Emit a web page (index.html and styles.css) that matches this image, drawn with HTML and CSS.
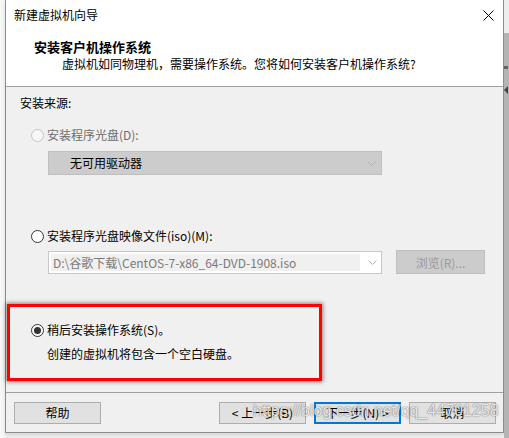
FILE: index.html
```html
<!DOCTYPE html>
<html lang="zh-CN">
<head>
<meta charset="utf-8">
<title>新建虚拟机向导</title>
<link rel="stylesheet" href="styles.css">
</head>
<body>
<div class="screen">
  <div class="gutter-left"></div>
  <div class="window">
    <div class="titlebar">
      <span class="title">新建虚拟机向导</span>
      <svg class="close" width="11" height="11" viewBox="0 0 11 11"><path d="M0.5 0.5 L10.5 10.5 M10.5 0.5 L0.5 10.5" stroke="#000" stroke-width="1" fill="none"/></svg>
    </div>
    <div class="header">
      <div class="h-title">安装客户机操作系统</div>
      <div class="h-sub">虚拟机如同物理机，需要操作系统。您将如何安装客户机操作系统?</div>
    </div>
    <div class="content">
      <div class="label">安装来源:</div>
      <div class="radio-row row-disc disabled"><span class="radio"></span><span>安装程序光盘(D):</span></div>
      <div class="select">
        <span class="select-text">无可用驱动器</span>
        <svg class="chev" width="9" height="5" viewBox="0 0 9 5"><path d="M0.5 0.5 L4.5 4.5 L8.5 0.5" stroke="#b0b0b0" fill="none"/></svg>
      </div>
      <div class="radio-row row-iso"><span class="radio"></span><span>安装程序光盘映像文件(iso)(M):</span></div>
      <div class="path-row">
        <div class="combo">
          <span class="combo-text">D:\谷歌下载\CentOS-7-x86_64-DVD-1908.iso</span>
          <svg class="chev" width="9" height="5" viewBox="0 0 9 5"><path d="M0.5 0.5 L4.5 4.5 L8.5 0.5" stroke="#b0b0b0" fill="none"/></svg>
        </div>
        <div class="browse">浏览(R)...</div>
      </div>
      <div class="highlight">
        <div class="radio-row"><span class="radio checked"></span><span>稍后安装操作系统(S)。</span></div>
        <div class="desc">创建的虚拟机将包含一个空白硬盘。</div>
      </div>
    </div>
    <div class="footer">
      <div class="btn">帮助</div>
      <div class="spacer"></div>
      <div class="btn">&lt; 上一步(B)</div>
      <div class="btn default">下一步(N) &gt;</div>
      <div class="btn">取消</div>
    </div>
  </div>
  <div class="gutter-right">
    <div class="gr-top"></div>
    <div class="gr-dash"></div>
    <div class="gr-arrow"></div>
  </div>
</div>
<div class="watermark">https://blog.csdn.net/qq_44701258</div>
</body>
</html>
```
FILE: styles.css
```css
html, body {
  margin: 0;
  padding: 0;
}
body {
  width: 509px;
  height: 438px;
  overflow: hidden;
  background: #f0f0f0;
  font-family: "Noto Sans CJK SC", "Noto Sans", sans-serif;
  font-size: 12px;
  color: #000;
  position: relative;
}
.screen {
  display: flex;
  height: 438px;
}
.gutter-left {
  width: 5px;
  background: #f7f7f7;
}
.window {
  width: 497px;
  height: 432px;
  border: 1px solid #8c8c8c;
  border-top: none;
  background: #f0f0f0;
  display: flex;
  flex-direction: column;
  box-shadow: 0 2px 4px rgba(0,0,0,0.12);
}
.gutter-right {
  flex: 1;
  background: #b4b4b4;
  display: flex;
  flex-direction: column;
}
.gr-top {
  height: 33px;
  background: #ededed;
}
.gr-dash {
  margin-top: 33px;
  height: 3px;
  width: 4px;
  background: #5a6470;
}
.gr-arrow {
  margin-top: 17px;
  width: 0;
  height: 0;
  border-top: 4px solid transparent;
  border-bottom: 4px solid transparent;
  border-right: 4px solid #3c4650;
}
.titlebar {
  height: 30px;
  background: #fff;
  display: flex;
  align-items: center;
  justify-content: space-between;
  padding: 0 9px 0 8px;
}
.title {
  line-height: 16px;
}
.close {
  display: block;
}
.header {
  height: 57px;
  box-sizing: border-box;
  background: #fff;
  border-bottom: 1px solid #a0a0a0;
  padding-top: 9px;
}
.h-title {
  font-weight: bold;
  font-size: 13px;
  line-height: 16px;
  padding-left: 28px;
}
.h-sub {
  line-height: 16px;
  margin-top: 1px;
  padding-left: 56px;
}
.content {
  display: flex;
  flex-direction: column;
  align-items: flex-start;
}
.label {
  margin-top: 8px;
  padding-left: 14px;
  line-height: 16px;
}
.radio-row {
  display: flex;
  align-items: center;
  line-height: 16px;
}
.row-disc {
  margin-top: 16px;
  padding-left: 25px;
}
.row-iso {
  margin-top: 53px;
  padding-left: 25px;
}
.radio {
  width: 11px;
  height: 11px;
  border: 1px solid #333;
  border-radius: 50%;
  background: #fff;
  margin-right: 3px;
  position: relative;
  flex: none;
}
.radio.checked::after {
  content: "";
  position: absolute;
  left: 2px;
  top: 2px;
  width: 7px;
  height: 7px;
  border-radius: 50%;
  background: #333;
}
.disabled {
  color: #6d6d6d;
}
.disabled .radio {
  border-color: #c4c4c4;
  background: #f7f7f7;
}
.select {
  margin-top: 8px;
  margin-left: 42px;
  width: 334px;
  height: 24px;
  box-sizing: border-box;
  background: #cccccc;
  border: 1px solid #bfbfbf;
  display: flex;
  align-items: center;
  justify-content: space-between;
  padding: 0 5px 0 21px;
}
.select-text {
  line-height: 16px;
}
.chev {
  display: block;
}
.path-row {
  margin-top: 6px;
  margin-left: 42px;
  display: flex;
  align-items: flex-start;
  gap: 14px;
}
.combo {
  margin-top: 1px;
  width: 334px;
  height: 23px;
  box-sizing: border-box;
  background: #fff;
  border: 1px solid #c8c8c8;
  display: flex;
  align-items: center;
  padding: 2px 4px 2px 2px;
  gap: 8px;
}
.combo-text {
  width: 311px;
  height: 17px;
  background: #f0f0f0;
  color: #7a7a7a;
  line-height: 17px;
  padding-left: 2px;
  box-sizing: border-box;
  white-space: nowrap;
  overflow: hidden;
}
.browse {
  width: 89px;
  height: 24px;
  box-sizing: border-box;
  background: #cccccc;
  border: 1px solid #bfbfbf;
  color: #9a9a9a;
  display: flex;
  align-items: center;
  justify-content: center;
}
.highlight {
  margin-top: 30px;
  margin-left: 1px;
  width: 315px;
  height: 77px;
  box-sizing: border-box;
  border: 3px solid #ff0000;
  box-shadow: 0 0 4px 1px rgba(0,0,0,0.45);
  padding: 15px 0 0 21px;
}
.desc {
  margin-top: 8px;
  padding-left: 16px;
  line-height: 16px;
}
.footer {
  margin-top: auto;
  border-top: 1px solid #a0a0a0;
  padding: 9px 7px 8px 8px;
  display: flex;
  gap: 8px;
}
.spacer {
  flex: 1;
}
.btn {
  width: 87px;
  height: 22px;
  box-sizing: border-box;
  background: #e1e1e1;
  border: 1px solid #adadad;
  display: flex;
  align-items: center;
  justify-content: center;
  line-height: 16px;
}
.btn.default {
  border: 2px solid #0078d7;
}
.watermark {
  position: absolute;
  left: 253px;
  top: 402px;
  font-family: "Liberation Sans", Arial, sans-serif;
  font-size: 16px;
  line-height: 18px;
  color: rgba(255,255,255,0.85);
  text-shadow: 0 0 1px rgba(0,0,0,0.55), 0 0 2px rgba(0,0,0,0.25);
  white-space: nowrap;
}
```
